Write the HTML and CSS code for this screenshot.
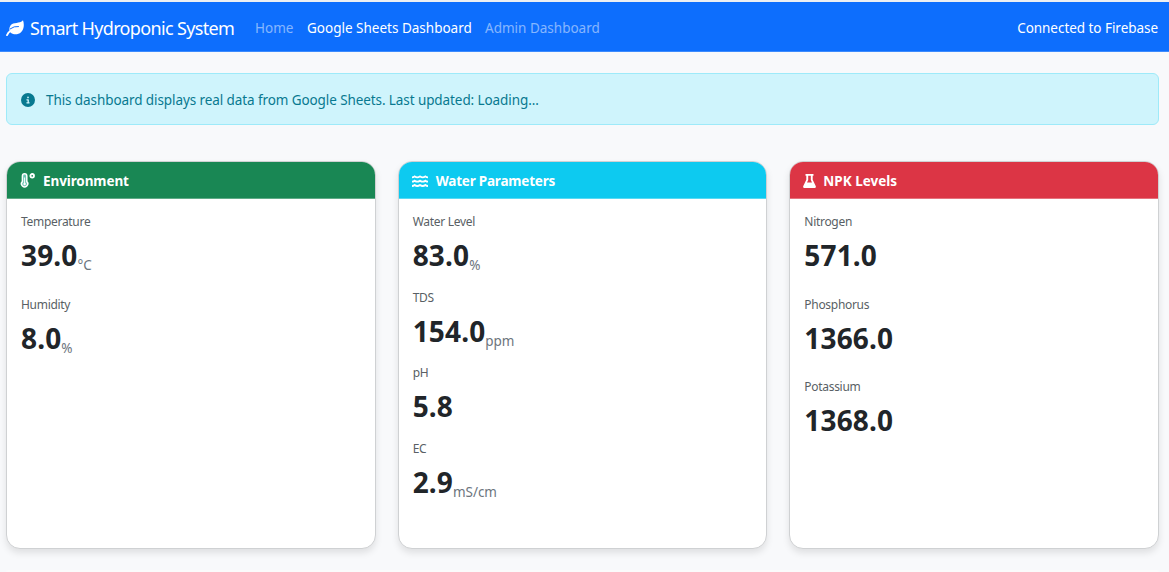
FILE: index.html
```html
<!DOCTYPE html>
<html lang="en">
<head>
<meta charset="utf-8">
<title>Smart Hydroponic System</title>
<link rel="stylesheet" href="styles.css">
</head>
<body>
<nav class="navbar">
  <svg class="leaf" viewBox="0 0 18 16"><path class="blade" d="M17 .3C18.5 4.500 18 9.500 15 12.200C12.500 14.500 8 15 5 13C3 11.500 2.800 7.500 4.500 5.400C7.500 1.700 13.500 4.200 17 .3z"/><path class="stem" d="M1 15.200Q2.500 11.800 5 10.500"/><path class="vein" d="M4.300 8.800Q8 5.900 12.500 6.500"/></svg>
  <span class="brand">Smart Hydroponic System</span>
  <div class="links">
    <a class="link home">Home</a>
    <a class="link active">Google Sheets Dashboard</a>
    <a class="link admin">Admin Dashboard</a>
  </div>
  <span class="status">Connected to Firebase</span>
</nav>
<main class="container">
  <div class="alert">
    <svg class="info" viewBox="0 0 512 512"><path d="M256 512A256 256 0 1 0 256 0a256 256 0 1 0 0 512zM216 336h24V272H216c-13.3 0-24-10.7-24-24s10.7-24 24-24h48c13.3 0 24 10.7 24 24v88h8c13.3 0 24 10.7 24 24s-10.7 24-24 24H216c-13.3 0-24-10.7-24-24s10.7-24 24-24zm40-208a32 32 0 1 1 0 64 32 32 0 1 1 0-64z"/></svg>
    <span class="alert-text">This dashboard displays real data from Google Sheets. Last updated: Loading...</span>
  </div>
  <div class="cards">
    <section class="card">
      <header class="card-header green">
        <svg class="thermo" viewBox="0 0 15 15"><path class="tube" d="M2.400 3a2.200 2.200 0 0 1 4.400 0v5.600a3.100 3.100 0 1 1-4.400 0z"/><path class="mercury" d="M4.600 4.500v6.500"/><circle class="bulb" cx="4.600" cy="11" r="1.2"/><circle class="degree" cx="12.200" cy="2.800" r="1.800"/></svg>
        <span class="title t-env">Environment</span>
      </header>
      <div class="card-body wide">
        <div class="metric"><div class="label">Temperature</div><div class="value">39.0<span class="unit">°C</span></div></div>
        <div class="metric"><div class="label">Humidity</div><div class="value">8.0<span class="unit">%</span></div></div>
      </div>
    </section>
    <section class="card">
      <header class="card-header cyan">
        <svg class="waves" viewBox="0 0 16 12"><path d="M0 2.4q1.4 0 2.7-1q2.6 2 5.3 0q2.7 2 5.3 0q1.3 1 2.7 1M0 6.700q1.4 0 2.7-1q2.6 2 5.3 0q2.7 2 5.3 0q1.3 1 2.7 1M0 11q1.4 0 2.7-1q2.6 2 5.3 0q2.7 2 5.3 0q1.3 1 2.7 1"/></svg>
        <span class="title t-water">Water Parameters</span>
      </header>
      <div class="card-body">
        <div class="metric"><div class="label">Water Level</div><div class="value">83.0<span class="unit">%</span></div></div>
        <div class="metric"><div class="label">TDS</div><div class="value">154.0<span class="unit">ppm</span></div></div>
        <div class="metric"><div class="label">pH</div><div class="value">5.8</div></div>
        <div class="metric"><div class="label">EC</div><div class="value">2.9<span class="unit">mS/cm</span></div></div>
      </div>
    </section>
    <section class="card">
      <header class="card-header red">
        <svg class="flask" viewBox="0 0 13 14"><path fill-rule="evenodd" d="M2.500 0h8v1.700H9.700v4L12.700 12q.7 2-1.200 2h-10q-1.900 0-1.200-2L3.300 5.700v-4H2.500zM5.200 1.700v4.300L4 8.500h5L7.800 6V1.700z"/></svg>
        <span class="title t-npk">NPK Levels</span>
      </header>
      <div class="card-body wide">
        <div class="metric"><div class="label">Nitrogen</div><div class="value">571.0</div></div>
        <div class="metric"><div class="label">Phosphorus</div><div class="value">1366.0</div></div>
        <div class="metric"><div class="label">Potassium</div><div class="value">1368.0</div></div>
      </div>
    </section>
  </div>
  <div class="next-card"></div>
</main>
</body>
</html>
```

FILE: styles.css
```css
* { box-sizing: border-box; }
body {
  margin: 0;
  height: 572px;
  background: #f8f9fb;
  color: #212529;
  font-family: "Segoe UI", "Noto Sans", sans-serif;
  font-size: 13.5px;
}
svg { display: block; flex: none; fill: currentColor; }
span, a, .label, .value { white-space: nowrap; }

.navbar {
  display: flex;
  align-items: center;
  height: 52px;
  padding: 2px 11px 0 6px;
  border-top: 2px solid #eceff2;
  border-bottom: 1px solid #3d8bfd;
  background: #0d6efd;
  color: #fff;
}
.leaf { width: 18px; height: 16px; margin-right: 6px; }
.stem { fill: none; stroke: #fff; stroke-width: 1.8; stroke-linecap: round; }
.vein { fill: none; stroke: #0d6efd; stroke-width: 1; stroke-linecap: round; }
.brand { width: 225px; font-size: 18px; letter-spacing: -0.65px; }
.links { display: flex; flex: 1; }
.link { color: rgba(255, 255, 255, .5); font-size: 13.5px; }
.home { width: 52px; }
.active { width: 178px; color: #fff; }
.status { font-size: 13.5px; letter-spacing: -0.04px; }

.container { padding: 21px 10px 0 6px; }
.alert {
  display: flex;
  align-items: center;
  height: 52px;
  padding: 2px 14px 0;
  border: 1px solid #9eeaf9;
  border-radius: 6px;
  background: #cff4fc;
  color: #087990;
}
.info { width: 14px; height: 14px; margin-right: 11px; }
.alert-text { letter-spacing: -0.09px; }

.cards {
  display: grid;
  grid-template-columns: repeat(3, 1fr);
  gap: 22px;
  height: 388px;
  margin-top: 36px;
}
.card {
  overflow: hidden;
  border: 1px solid #cfd1d3;
  border-radius: 14px;
  background: #fff;
  box-shadow: 0 4px 7px rgba(0, 0, 0, .1);
}
.card-header {
  display: flex;
  align-items: center;
  height: 37px;
  padding: 1px 13px 0;
  border-bottom: 1px solid rgba(255, 255, 255, .3);
  color: #fff;
}
.green { background: #198754; }
.cyan { background: #0dcaf0; }
.red { background: #dc3545; }
.title { font-size: 13.5px; font-weight: 700; }
.t-env { letter-spacing: -0.1px; }
.t-water { letter-spacing: -0.2px; }
.thermo { width: 15px; height: 15px; margin-right: 8px; }
.tube { fill: #6fc7b4; stroke: #fff; stroke-width: 1.5; }
.mercury { stroke: #fff; stroke-width: 1; }
.bulb { fill: #fff; }
.degree { fill: none; stroke: #fff; stroke-width: 1.8; }
.waves { width: 16px; height: 12px; margin-right: 8px; fill: none; stroke: #fff; stroke-width: 1.8; }
.flask { width: 13px; height: 14px; margin-right: 7px; }

.card-body { padding: 14px 14px 0; }
.metric { height: 75.7px; }
.wide .metric { height: 82.7px; }
.label { height: 18px; color: #595f65; font-size: 12px; line-height: 18px; letter-spacing: -0.3px; }
.value { height: 40px; margin-top: 4px; font-size: 28px; font-weight: 700; line-height: 40px; letter-spacing: 0.15px; }
.unit { position: relative; top: 4px; color: #6c757d; font-size: 13.5px; font-weight: 400; letter-spacing: -0.05px; }

.next-card { height: 2px; margin-top: 21px; border-radius: 2px 2px 0 0; background: #fbfbfb; }
```
